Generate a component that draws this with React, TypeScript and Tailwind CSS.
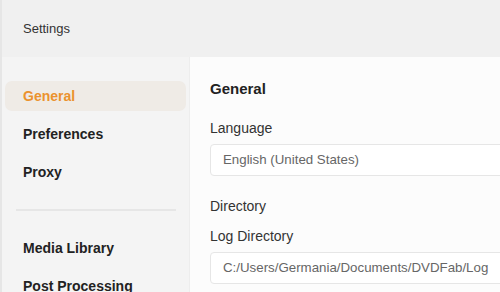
import React from "react";

const navTop = ["General", "Preferences", "Proxy"];
const navBottom = ["Media Library", "Post Processing"];

function NavItem({ label, active }: { label: string; active?: boolean }) {
  return (
    <div
      className={
        "ml-[3px] mr-[3px] h-[30px] shrink-0 flex items-center pl-[18px] rounded-[7px] text-[14px] font-bold " +
        (active ? "bg-[#efebe6] text-[#eb922e]" : "text-[#222]")
      }
    >
      {label}
    </div>
  );
}

function Field({ value }: { value: string }) {
  return (
    <div className="mt-[7px] h-[32px] w-[330px] shrink-0 flex items-center px-[12px] bg-white border border-[#e6e6e6] rounded-[4px] text-[13.3px] text-[#666] whitespace-nowrap">
      {value}
    </div>
  );
}

export default function App() {
  return (
    <div
      className="w-[500px] h-[292px] overflow-hidden flex flex-col border-l-2 border-[#e6e6e6]"
      style={{ fontFamily: '"Liberation Sans", Arial, sans-serif' }}
    >
      <div className="h-[57px] shrink-0 flex items-center pl-[21px] bg-[#f0f0f0] text-[13px] text-[#333]">
        Settings
      </div>
      <div className="flex flex-1 min-h-0">
        <div className="w-[188px] shrink-0 bg-[#f4f4f4] border-r border-[#ededed] pt-[24px] flex flex-col overflow-hidden">
          <div className="flex flex-col gap-[8px] shrink-0">
            {navTop.map((l, i) => (
              <NavItem key={l} label={l} active={i === 0} />
            ))}
          </div>
          <div className="shrink-0 mt-[22px] mb-[22px] ml-[14px] w-[160px] h-[2px] bg-[#e6e6e6]" />
          <div className="flex flex-col gap-[8px] shrink-0">
            {navBottom.map((l) => (
              <NavItem key={l} label={l} />
            ))}
          </div>
        </div>
        <div className="flex-1 bg-[#fcfcfc] pl-[20px] pt-[23px] flex flex-col overflow-hidden">
          <div className="text-[15px] leading-[18px] font-bold text-[#222]">General</div>
          <div className="mt-[22px] text-[14px] leading-[17px] text-[#333]">Language</div>
          <Field value="English (United States)" />
          <div className="mt-[22px] text-[14px] leading-[17px] text-[#333]">Directory</div>
          <div className="mt-[13px] text-[14px] leading-[17px] text-[#333]">Log Directory</div>
          <Field value="C:/Users/Germania/Documents/DVDFab/Log" />
        </div>
      </div>
    </div>
  );
}
